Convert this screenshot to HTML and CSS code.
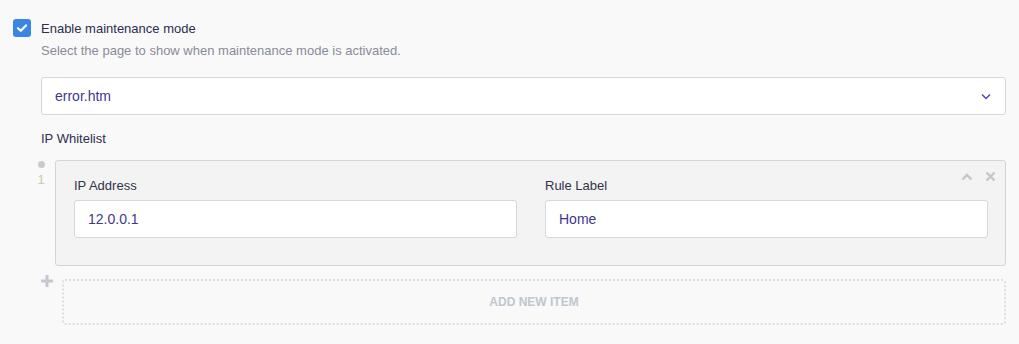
FILE: index.html
```html
<!DOCTYPE html>
<html lang="en">
<head>
	<meta charset="UTF-8">
	<title>Maintenance mode</title>
<link rel="stylesheet" href="styles.css">
</head>
<body>
	<div class="page">
		<div class="check-row">
			<span class="checkbox">
				<svg width="12" height="12" viewBox="0 0 12 12"><path d="M2 6.2 L4.8 8.8 L10 3.4" fill="none" stroke="#fff" stroke-width="2.2" stroke-linecap="round" stroke-linejoin="round"/></svg>
			</span>
			<span class="check-label">Enable maintenance mode</span>
		</div>
		<p class="hint">Select the page to show when maintenance mode is activated.</p>

		<div class="select">
			<span>error.htm</span>
			<svg width="10" height="7" viewBox="0 0 10 7"><path d="M1 1.5 L5 5.5 L9 1.5" fill="none" stroke="#4b44a8" stroke-width="1.4"/></svg>
		</div>

		<div class="section-label">IP Whitelist</div>

		<div class="repeater">
			<div class="gutter">
				<span class="dot"></span>
				<span class="num">1</span>
			</div>
			<div class="item">
				<div class="item-tools">
					<svg width="12" height="8" viewBox="0 0 12 8"><path d="M1.5 6.5 L6 2 L10.5 6.5" fill="none" stroke="#c6c6c6" stroke-width="2.4"/></svg>
					<svg width="11" height="11" viewBox="0 0 11 11"><path d="M1.5 1.5 L9.5 9.5 M9.5 1.5 L1.5 9.5" fill="none" stroke="#c6c6c6" stroke-width="2.4"/></svg>
				</div>
				<div class="col">
					<label>IP Address</label>
					<div class="input">12.0.0.1</div>
				</div>
				<div class="col">
					<label>Rule Label</label>
					<div class="input">Home</div>
				</div>
			</div>
		</div>

		<div class="add-row">
			<span class="plus">
				<svg width="12" height="12" viewBox="0 0 12 12"><path d="M6 0 V12 M0 6 H12" stroke="#c4c8ce" stroke-width="3"/></svg>
			</span>
			<div class="add-box">ADD NEW ITEM</div>
		</div>
	</div>
</body>
</html>
```

FILE: styles.css
```css
*{
	margin: 0;
	padding: 0;
	box-sizing: border-box;
}
body{
	background: #f9f9f9;
	font-family: "Liberation Sans", Arial, sans-serif;
	font-size: 13px;
	color: #2e2d4d;
}
.page{
	padding: 19px 13px 0 13px;
}
.check-row{
	display: flex;
	align-items: center;
	gap: 10px;
	height: 18px;
}
.checkbox{
	width: 18px;
	height: 18px;
	border-radius: 3px;
	background: #3b86e2;
	display: flex;
	align-items: center;
	justify-content: center;
}
.hint{
	margin: 6px 0 0 28px;
	line-height: 16px;
	color: #8a8b98;
}
.select{
	margin: 18px 0 0 28px;
	height: 38px;
	background: #fff;
	border: 1px solid #d5d7dc;
	border-radius: 3px;
	display: flex;
	align-items: center;
	justify-content: space-between;
	padding: 0 14px 0 13px;
	font-size: 14px;
	color: #3f3890;
}
.section-label{
	margin: 16px 0 0 28px;
	line-height: 16px;
	color: #2e2d4d;
}
.repeater{
	display: flex;
	margin-top: 13px;
}
.gutter{
	width: 14px;
	margin: 0 7px 0 21px;
	display: flex;
	flex-direction: column;
	align-items: center;
	padding-top: 1px;
}
.dot{
	width: 7px;
	height: 7px;
	border-radius: 50%;
	background: #c9cbd0;
}
.num{
	margin-top: 5px;
	font-size: 13px;
	line-height: 13px;
	color: #cfc7a6;
}
.item{
	flex: 1;
	position: relative;
	background: #f3f3f3;
	border: 1px solid #d4d4d4;
	border-radius: 3px;
	padding: 17px 17px 27px 18px;
	display: grid;
	grid-template-columns: 1fr 1fr;
	column-gap: 28px;
}
.item-tools{
	position: absolute;
	top: 10px;
	right: 9px;
	display: flex;
	align-items: center;
	gap: 12px;
}
.col label{
	display: block;
	line-height: 16px;
	margin-bottom: 6px;
	color: #33324a;
}
.input{
	height: 38px;
	background: #fff;
	border: 1px solid #d5d7dc;
	border-radius: 3px;
	padding: 0 13px;
	display: flex;
	align-items: center;
	font-size: 14px;
	color: #3f3890;
}
.add-row{
	display: flex;
	margin-top: 9px;
}
.plus{
	margin: 0 9px 0 27px;
	width: 13px;
	display: flex;
	justify-content: center;
}
.add-box{
	flex: 1;
	margin-top: 4px;
	height: 46px;
	border: 2px dotted #dedede;
	border-radius: 3px;
	display: flex;
	align-items: center;
	justify-content: center;
	font-size: 12px;
	font-weight: bold;
	color: #c0c6cf;
}
```
